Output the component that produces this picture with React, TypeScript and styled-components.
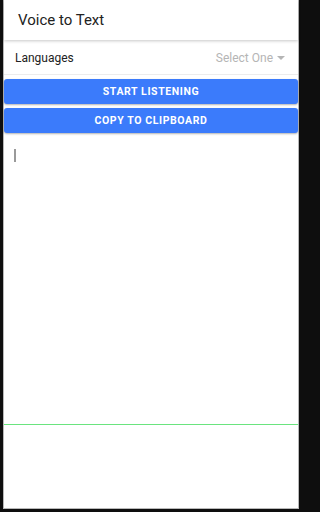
import React from "react";
import styled, { createGlobalStyle } from "styled-components";

const GlobalStyle = createGlobalStyle`
  html, body {
    margin: 0;
    padding: 0;
    background: #0e0e0e;
    font-family: Roboto, "Noto Sans", Arial, sans-serif;
  }
`;

const Frame = styled.div`
  width: 304px;
  height: 512px;
  overflow: hidden;
  padding-left: 3px;
  box-sizing: border-box;
`;

const Screen = styled.div`
  width: 296px;
  height: 509px;
  box-sizing: border-box;
  background: #fff;
  border: 1px solid #b8b8b8;
  border-top: none;
  display: flex;
  flex-direction: column;
`;

const Header = styled.div`
  height: 40px;
  display: flex;
  align-items: center;
  padding-left: 14px;
  font-size: 15px;
  color: #222;
  box-shadow: 0 1px 3px rgba(0, 0, 0, 0.22);
  position: relative;
  z-index: 1;
`;

const Row = styled.div`
  height: 33px;
  margin-top: 1px;
  display: flex;
  align-items: center;
  justify-content: space-between;
  padding: 0 13px 0 11px;
  font-size: 12px;
  color: #222;
  border-bottom: 1px solid #ececec;
`;

const Placeholder = styled.span`
  display: flex;
  align-items: center;
  gap: 4px;
  color: #b5b5b5;
  font-size: 12px;
`;

const Caret = styled.span`
  width: 0;
  height: 0;
  border-left: 4px solid transparent;
  border-right: 4px solid transparent;
  border-top: 4px solid #b5b5b5;
`;

const Buttons = styled.div`
  display: flex;
  flex-direction: column;
  gap: 4px;
  padding: 4px 0 0 0;
`;

const Button = styled.button`
  height: 25px;
  border: none;
  border-radius: 3px;
  background: #3b7bfb;
  color: #fff;
  font-family: Roboto, Arial, sans-serif;
  font-weight: 700;
  font-size: 10.5px;
  letter-spacing: 0.6px;
  box-shadow: 0 1px 2px rgba(0, 0, 0, 0.3);
  cursor: pointer;
`;

const TextArea = styled.div`
  height: 292px;
  padding: 16px 0 0 10px;
  box-sizing: border-box;
  border-bottom: 1px solid #6ae47f;
`;

const Cursor = styled.div`
  width: 2px;
  height: 13px;
  background: #9a9a9a;
`;

export default function App() {
  return (
    <>
      <GlobalStyle />
      <Frame>
        <Screen>
          <Header>Voice to Text</Header>
          <Row>
            <span>Languages</span>
            <Placeholder>
              Select One <Caret />
            </Placeholder>
          </Row>
          <Buttons>
            <Button>START LISTENING</Button>
            <Button>COPY TO CLIPBOARD</Button>
          </Buttons>
          <TextArea>
            <Cursor />
          </TextArea>
        </Screen>
      </Frame>
    </>
  );
}
